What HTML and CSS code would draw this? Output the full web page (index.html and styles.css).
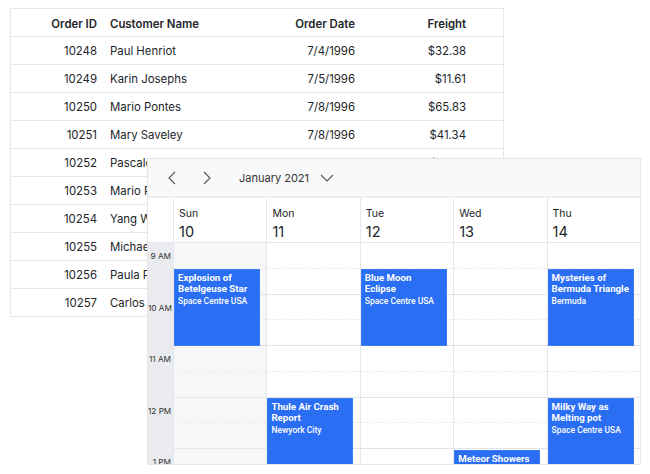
FILE: index.html
```html
<!DOCTYPE html>
<html>
<head>
<meta charset="utf-8">
<link rel="stylesheet" href="styles.css">
</head>
<body>
<div class="grid">
  <div class="row head-row">
    <div class="c c1">Order ID</div><div class="c c2">Customer Name</div><div class="c c3">Order Date</div><div class="c c4">Freight</div><div class="c c5"></div>
  </div>
  <div class="row"><div class="c c1">10248</div><div class="c c2">Paul Henriot</div><div class="c c3">7/4/1996</div><div class="c c4">$32.38</div><div class="c c5"></div></div>
  <div class="row"><div class="c c1">10249</div><div class="c c2">Karin Josephs</div><div class="c c3">7/5/1996</div><div class="c c4">$11.61</div><div class="c c5"></div></div>
  <div class="row"><div class="c c1">10250</div><div class="c c2">Mario Pontes</div><div class="c c3">7/8/1996</div><div class="c c4">$65.83</div><div class="c c5"></div></div>
  <div class="row"><div class="c c1">10251</div><div class="c c2">Mary Saveley</div><div class="c c3">7/8/1996</div><div class="c c4">$41.34</div><div class="c c5"></div></div>
  <div class="row"><div class="c c1">10252</div><div class="c c2">Pascale Cartrain</div><div class="c c3">7/9/1996</div><div class="c c4">$51.30</div><div class="c c5"></div></div>
  <div class="row"><div class="c c1">10253</div><div class="c c2">Mario Pontes</div><div class="c c3">7/10/1996</div><div class="c c4">$58.17</div><div class="c c5"></div></div>
  <div class="row"><div class="c c1">10254</div><div class="c c2">Yang Wang</div><div class="c c3">7/11/1996</div><div class="c c4">$22.98</div><div class="c c5"></div></div>
  <div class="row"><div class="c c1">10255</div><div class="c c2">Michael Holz</div><div class="c c3">7/12/1996</div><div class="c c4">$148.33</div><div class="c c5"></div></div>
  <div class="row"><div class="c c1">10256</div><div class="c c2">Paula Parente</div><div class="c c3">7/15/1996</div><div class="c c4">$13.97</div><div class="c c5"></div></div>
  <div class="row last"><div class="c c1">10257</div><div class="c c2">Carlos Hernández</div><div class="c c3">7/16/1996</div><div class="c c4">$81.91</div><div class="c c5"></div></div>
</div>

<div class="sched">
  <div class="toolbar">
    <span class="nav"><svg width="8" height="14" viewBox="0 0 8 14"><path d="M7 1 L1 7 L7 13" fill="none" stroke="#555" stroke-width="1.1"/></svg></span>
    <span class="nav"><svg width="8" height="14" viewBox="0 0 8 14"><path d="M1 1 L7 7 L1 13" fill="none" stroke="#555" stroke-width="1.1"/></svg></span>
    <span class="title">January 2021</span>
    <span class="drop"><svg width="14" height="8" viewBox="0 0 14 8"><path d="M1 1 L7 7 L13 1" fill="none" stroke="#555" stroke-width="1.1"/></svg></span>
  </div>
  <div class="dates">
    <div class="corner"></div>
    <div class="dh"><span class="dn">Sun</span><span class="dd">10</span></div>
    <div class="dh"><span class="dn">Mon</span><span class="dd">11</span></div>
    <div class="dh"><span class="dn">Tue</span><span class="dd">12</span></div>
    <div class="dh"><span class="dn">Wed</span><span class="dd">13</span></div>
    <div class="dh"><span class="dn">Thu</span><span class="dd">14</span></div>
  </div>
  <div class="body">
    <div class="times">
      <div class="hour"><span>9 AM</span></div>
      <div class="hour"><span>10 AM</span></div>
      <div class="hour"><span>11 AM</span></div>
      <div class="hour"><span>12 PM</span></div>
      <div class="hour"><span>1 PM</span></div>
    </div>
    <div class="day off">
      <div class="slot"></div><div class="slot"></div><div class="slot"></div><div class="slot"></div><div class="slot"></div><div class="slot"></div><div class="slot"></div><div class="slot"></div><div class="slot"></div><div class="slot"></div>
      <div class="ev" style="top:26px;height:77px"><div class="sub">Explosion of Betelgeuse Star</div><div class="loc">Space Centre USA</div></div>
    </div>
    <div class="day">
      <div class="slot"></div><div class="slot"></div><div class="slot"></div><div class="slot"></div><div class="slot"></div><div class="slot"></div><div class="slot"></div><div class="slot"></div><div class="slot"></div><div class="slot"></div>
      <div class="ev" style="top:155px;height:77px"><div class="sub">Thule Air Crash Report</div><div class="loc">Newyork City</div></div>
    </div>
    <div class="day">
      <div class="slot"></div><div class="slot"></div><div class="slot"></div><div class="slot"></div><div class="slot"></div><div class="slot"></div><div class="slot"></div><div class="slot"></div><div class="slot"></div><div class="slot"></div>
      <div class="ev" style="top:26px;height:77px"><div class="sub">Blue Moon Eclipse</div><div class="loc">Space Centre USA</div></div>
    </div>
    <div class="day">
      <div class="slot"></div><div class="slot"></div><div class="slot"></div><div class="slot"></div><div class="slot"></div><div class="slot"></div><div class="slot"></div><div class="slot"></div><div class="slot"></div><div class="slot"></div>
      <div class="ev" style="top:207px;height:77px"><div class="sub">Meteor Showers</div><div class="loc">Space Centre USA</div></div>
    </div>
    <div class="day">
      <div class="slot"></div><div class="slot"></div><div class="slot"></div><div class="slot"></div><div class="slot"></div><div class="slot"></div><div class="slot"></div><div class="slot"></div><div class="slot"></div><div class="slot"></div>
      <div class="ev" style="top:26px;height:77px"><div class="sub">Mysteries of Bermuda Triangle</div><div class="loc">Bermuda</div></div>
      <div class="ev" style="top:155px;height:77px"><div class="sub">Milky Way as Melting pot</div><div class="loc">Space Centre USA</div></div>
    </div>
  </div>
</div>
</body>
</html>
```

FILE: styles.css
```css
* { box-sizing: border-box; }
html, body { margin: 0; padding: 0; background: #fff; }
body {
  position: relative;
  width: 650px;
  height: 474px;
  overflow: hidden;
  font-family: "Inter", "Noto Sans", sans-serif;
  color: #212529;
}

/* ---------- data grid ---------- */
.grid {
  margin: 8px 0 0 10px;
  width: 494px;
  border: 1px solid #e6e7e9;
  border-bottom: none;
}
.row {
  display: grid;
  grid-template-columns: 99px 150px 107px 111px 1fr;
  height: 28px;
  border-bottom: 1px solid #e6e7e9;
  font-size: 11.4px;
  align-items: center;
}
.head-row { height: 28px; font-weight: 600; padding-top: 3px; }
.c { white-space: nowrap; overflow: hidden; }
.c1 { text-align: right; padding-right: 13px; }
.c2 { text-align: left; }
.c3 { text-align: right; padding-right: 12px; }
.c4 { text-align: right; padding-right: 12px; }

/* ---------- scheduler ---------- */
.sched {
  position: absolute;
  left: 147px;
  top: 158px;
  width: 494px;
  height: 307px;
  background: #fff;
  border: 1px solid #e4e6e9;
  display: flex;
  flex-direction: column;
  overflow: hidden;
}
.toolbar {
  height: 39px;
  flex: none;
  background: #f8f9fa;
  border-bottom: 2px solid #eceef0;
  display: flex;
  align-items: center;
  padding-left: 20px;
  font-size: 11px;
  color: #333;
}
.nav { display: flex; width: 8px; height: 14px; margin-right: 27px; }
.title { margin-left: 1px; }
.drop { display: flex; margin-left: 11px; margin-top: 1px; }

.dates {
  height: 45px;
  flex: none;
  display: grid;
  grid-template-columns: 25px repeat(5, 1fr);
  border-bottom: 1px solid #e4e6e9;
}
.dh {
  border-left: 1px solid #e4e6e9;
  display: flex;
  flex-direction: column;
  padding: 9px 0 0 5px;
}
.dn { font-size: 10.5px; line-height: 14px; }
.dd { font-size: 14.5px; line-height: 20px; margin-top: 1px; }

.body {
  flex: 1;
  display: grid;
  grid-template-columns: 25px repeat(5, 1fr);
  overflow: hidden;
}
.times { background: #e9ebee; }
.hour {
  height: 51.5px;
  font-size: 8.2px;
  color: #333;
}
.hour span {
  display: block;
  height: 25.75px;
  line-height: 26px;
  text-align: right;
  padding-right: 2px;
  white-space: nowrap;
}
.day {
  position: relative;
  border-left: 1px solid #e4e6e9;
}
.day.off { background: #f6f7f8; }
.slot {
  height: 25.75px;
  border-bottom: 1px dashed #ebecee;
}
.slot:nth-child(even) { border-bottom: 1px solid #e2e4e7; }

.ev {
  position: absolute;
  left: 0;
  width: 86px;
  background: #2a6ef4;
  border: 1px solid #3b7bf6;
  color: #fff;
  padding: 3px 2px 0 3px;
  font-family: "Roboto", "Inter", sans-serif;
  overflow: hidden;
}
.sub { font-size: 9.7px; font-weight: 700; line-height: 10.5px; }
.loc { font-size: 8.5px; font-weight: 500; line-height: 12px; margin-top: 1px; }
```
